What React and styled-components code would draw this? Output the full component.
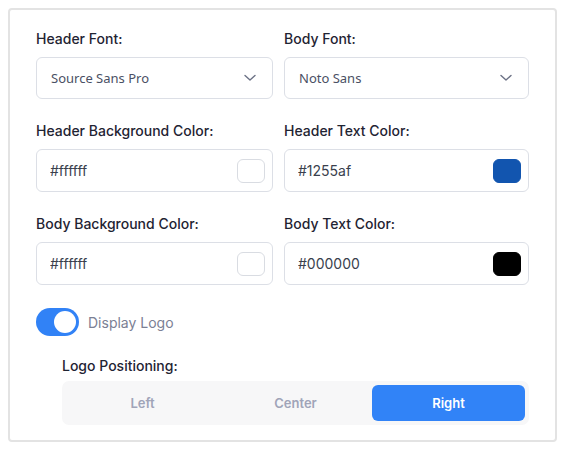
import React, { useState } from 'react'
import styled, { createGlobalStyle } from 'styled-components'

const GlobalStyle = createGlobalStyle`
  body {
    margin: 8px;
    background: #ffffff;
    font-family: Inter, "Noto Sans", sans-serif;
  }
  * {
    box-sizing: border-box;
  }
`

const Panel = styled.div`
  border: 2px solid #e3e3e3;
  border-radius: 4px;
  padding: 20px 26px 15px 26px;
  display: flex;
  flex-direction: column;
  gap: 23px;
`

const FieldGrid = styled.div`
  display: grid;
  grid-template-columns: 237px 1fr;
  column-gap: 11px;
  row-gap: 23px;
`

const Field = styled.div`
  display: flex;
  flex-direction: column;
  gap: 9px;
`

const Label = styled.label`
  font-size: 14px;
  line-height: 18px;
  font-weight: 500;
  color: #1f2433;
`

const SelectBox = styled.div`
  height: 42px;
  border: 1px solid #dcdfe6;
  border-radius: 6px;
  padding: 0 16px 0 14px;
  display: flex;
  align-items: center;
  justify-content: space-between;
  font-family: "Noto Sans", sans-serif;
  font-size: 13px;
  color: #4a5064;
  cursor: pointer;
`

const ColorBox = styled.div`
  height: 43px;
  border: 1px solid #dcdfe6;
  border-radius: 6px;
  padding: 0 7px 0 13px;
  display: flex;
  align-items: center;
  justify-content: space-between;
`

const HexInput = styled.input`
  border: none;
  outline: none;
  background: none;
  padding: 0;
  width: 150px;
  font-family: Inter, sans-serif;
  font-size: 14px;
  color: #3a3f4d;
`

const Swatch = styled.span`
  width: 28px;
  height: 24px;
  border-radius: 6px;
  background: ${p => p.$color};
  border: 1px solid ${p => (p.$color === '#ffffff' ? '#d9dce2' : p.$color)};
`

const ToggleRow = styled.div`
  display: flex;
  align-items: center;
  gap: 9px;
`

const Switch = styled.button`
  width: 43px;
  height: 28px;
  border: none;
  border-radius: 14px;
  padding: 3px;
  background: ${p => (p.$on ? '#3182f6' : '#d1d5db')};
  display: flex;
  justify-content: ${p => (p.$on ? 'flex-end' : 'flex-start')};
  cursor: pointer;

  &::after {
    content: '';
    width: 22px;
    height: 22px;
    border-radius: 50%;
    background: #ffffff;
  }
`

const ToggleText = styled.span`
  font-size: 14px;
  color: #7b8094;
`

const LogoSection = styled.div`
  margin-top: -2px;
  padding-left: 26px;
  display: flex;
  flex-direction: column;
  gap: 6px;
`

const Segmented = styled.div`
  background: #f7f7f8;
  border-radius: 7px;
  padding: 4px;
  display: grid;
  grid-template-columns: repeat(3, 1fr);
`

const Segment = styled.button`
  height: 36px;
  border: none;
  border-radius: 6px;
  background: ${p => (p.$active ? '#3183f7' : 'transparent')};
  color: ${p => (p.$active ? '#ffffff' : '#a0a4b8')};
  font-family: Inter, sans-serif;
  font-size: 13px;
  font-weight: 600;
  cursor: pointer;
`

const Chevron = () => (
  <svg width="12" height="8" viewBox="0 0 12 8" fill="none">
    <path d="M1 1.5l5 4.5 5-4.5" stroke="#6b7185" strokeWidth="1.4" strokeLinecap="round" strokeLinejoin="round" />
  </svg>
)

const colorFields = [
  { label: 'Header Background Color:', value: '#ffffff' },
  { label: 'Header Text Color:', value: '#1255af' },
  { label: 'Body Background Color:', value: '#ffffff' },
  { label: 'Body Text Color:', value: '#000000' },
]

export default function App() {
  const [showLogo, setShowLogo] = useState(true)
  const [position, setPosition] = useState('Right')

  return (
    <>
      <GlobalStyle />
      <Panel>
        <FieldGrid>
          <Field>
            <Label>Header Font:</Label>
            <SelectBox>
              Source Sans Pro
              <Chevron />
            </SelectBox>
          </Field>
          <Field>
            <Label>Body Font:</Label>
            <SelectBox>
              Noto Sans
              <Chevron />
            </SelectBox>
          </Field>
          {colorFields.map(f => (
            <Field key={f.label}>
              <Label>{f.label}</Label>
              <ColorBox>
                <HexInput defaultValue={f.value} />
                <Swatch $color={f.value} />
              </ColorBox>
            </Field>
          ))}
        </FieldGrid>

        <ToggleRow>
          <Switch $on={showLogo} onClick={() => setShowLogo(!showLogo)} />
          <ToggleText>Display Logo</ToggleText>
        </ToggleRow>

        <LogoSection>
          <Label>Logo Positioning:</Label>
          <Segmented>
            {['Left', 'Center', 'Right'].map(p => (
              <Segment key={p} $active={position === p} onClick={() => setPosition(p)}>
                {p}
              </Segment>
            ))}
          </Segmented>
        </LogoSection>
      </Panel>
    </>
  )
}
